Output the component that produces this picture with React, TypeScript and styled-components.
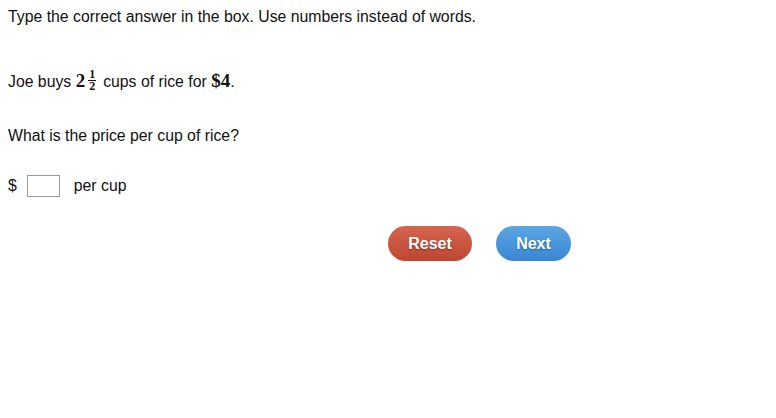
import React from "react";
import styled, { createGlobalStyle } from "styled-components";

const Global = createGlobalStyle`
  body { margin: 8px; background: #fff; font-family: "Liberation Sans", Arial, sans-serif; color: #111; }
`;

const Page = styled.div`
  display: flex;
  flex-direction: column;
`;

const Para = styled.p<{ $mt: number }>`
  margin: ${(p) => p.$mt}px 0 0 0;
  font-size: 15.8px;
  line-height: 18px;
`;

const Math = styled.span`
  font-family: "Liberation Serif", "Times New Roman", serif;
  font-weight: bold;
  font-size: 19px;
`;

const Frac = styled.span`
  display: inline-flex;
  flex-direction: column;
  align-items: center;
  vertical-align: middle;
  font-family: "Liberation Serif", serif;
  font-weight: bold;
  font-size: 12px;
  margin: 0 7px 0 3px;
  position: relative;
  top: -2px;
`;

const Num = styled.span`
  padding: 0 1px 1px;
  border-bottom: 1px solid #111;
  line-height: 9px;
`;

const Den = styled.span`
  padding-top: 1px;
  line-height: 9px;
`;

const AnswerRow = styled.div`
  display: flex;
  align-items: center;
  margin-top: 30px;
  font-size: 15.8px;
`;

const Box = styled.input`
  width: 33px;
  height: 22px;
  box-sizing: border-box;
  border: 1px solid #9a9a9a;
  margin: 0 14px 0 10px;
  padding: 0;
`;

const Buttons = styled.div`
  display: flex;
  gap: 24px;
  margin: 29px 0 0 380px;
`;

const Btn = styled.button<{ $c1: string; $c2: string; $w: number }>`
  width: ${(p) => p.$w}px;
  height: 35px;
  border: none;
  border-radius: 18px;
  background: linear-gradient(${(p) => p.$c1}, ${(p) => p.$c2});
  color: #fff;
  font-family: "Liberation Sans", Arial, sans-serif;
  font-weight: bold;
  font-size: 16px;
  text-shadow: 0 1px 2px rgba(0, 0, 0, 0.35);
  padding: 0;
`;

export default function App() {
  return (
    <Page>
      <Global />
      <Para $mt={0}>Type the correct answer in the box. Use numbers instead of words.</Para>
      <Para $mt={46}>
        Joe buys <Math>2</Math>
        <Frac>
          <Num>1</Num>
          <Den>2</Den>
        </Frac>
        cups of rice for <Math>$4</Math>.
      </Para>
      <Para $mt={34}>What is the price per cup of rice?</Para>
      <AnswerRow>
        <span>$</span>
        <Box />
        <span>per cup</span>
      </AnswerRow>
      <Buttons>
        <Btn $c1="#d6654f" $c2="#bd4632" $w={84}>Reset</Btn>
        <Btn $c1="#5ca6e2" $c2="#3886d5" $w={75}>Next</Btn>
      </Buttons>
    </Page>
  );
}
